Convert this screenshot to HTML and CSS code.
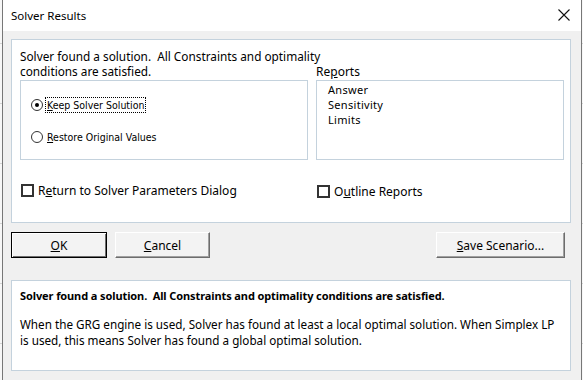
FILE: index.html
```html
<!DOCTYPE html>
<html lang="en">

<head>
    <meta charset="UTF-8">
    <meta name="viewport" content="width=device-width, initial-scale=1.0">
    <link rel="stylesheet" href="styles.css">
    <title>Solver Results</title>
</head>

<body>

    <div class="window">
        <header class="title-bar">
            <span class="title">Solver Results</span>
            <svg class="close" width="12" height="12" viewBox="0 0 12 12">
                <path d="M0.5 0.5 L11.5 11.5 M11.5 0.5 L0.5 11.5" stroke="#111" stroke-width="1.1" fill="none" />
            </svg>
        </header>

        <div class="dialog-body">
            <div class="panel results">
                <div class="message">Solver found a solution.&nbsp; All Constraints and optimality<br>conditions are satisfied.</div>
                <div class="reports-label">Re<u>p</u>orts</div>

                <div class="options">
                    <label class="radio-row">
                        <span class="radio checked"></span>
                        <span class="radio-text focus"><u>K</u>eep Solver Solution</span>
                    </label>
                    <label class="radio-row">
                        <span class="radio"></span>
                        <span class="radio-text"><u>R</u>estore Original Values</span>
                    </label>
                </div>

                <ul class="report-list" type="none">
                    <li>Answer</li>
                    <li>Sensitivity</li>
                    <li>Limits</li>
                </ul>

                <label class="check-row">
                    <span class="checkbox"></span>
                    <span>R<u>e</u>turn to Solver Parameters Dialog</span>
                </label>
                <label class="check-row outline">
                    <span class="checkbox"></span>
                    <span>O<u>u</u>tline Reports</span>
                </label>
            </div>

            <div class="buttons">
                <button class="btn default"><u>O</u>K</button>
                <button class="btn cancel"><u>C</u>ancel</button>
                <button class="btn save"><u>S</u>ave Scenario...</button>
            </div>

            <div class="panel details">
                <p class="details-head">Solver found a solution.&nbsp; All Constraints and optimality conditions are satisfied.</p>
                <p class="details-text">When the GRG engine is used, Solver has found at least a local optimal solution. When Simplex LP is used, this means Solver has found a global optimal solution.</p>
            </div>
        </div>
    </div>

</body>

</html>
```

FILE: styles.css
```css
body {
    margin: 0;
    padding: 0;
    height: 380px;
    overflow: hidden;
    background-color: #f7f7f7;
    background-image: repeating-linear-gradient(to bottom, transparent 0, transparent 43px, #d4d4d4 43px, #d4d4d4 44px, transparent 44px, transparent 60px);
    font-family: "Noto Sans", "Open Sans", sans-serif;
    font-size: 12px;
    color: #000;
}

.window {
    margin-left: 2px;
    width: 578px;
    height: 380px;
    border-left: 1px solid #777;
    border-right: 1px solid #777;
    background: #f0f0f0;
}

.title-bar {
    height: 31px;
    background: #fff;
    display: flex;
    align-items: center;
    justify-content: space-between;
    padding: 0 11px 0 8px;
}

.title {
    font-size: 11.5px;
    padding-bottom: 1px;
}

.close {
    margin-bottom: 1px;
}

.dialog-body {
    padding: 8px 10px 0 8px;
}

.panel {
    background: #fff;
    border: 1px solid #c4d2dd;
}

.results {
    height: 173px;
    box-sizing: content-box;
    padding: 9px 0 0 8px;
    display: grid;
    grid-template-columns: 288px 248px;
    grid-template-rows: 31px 80px 1fr;
    column-gap: 8px;
}

.message {
    white-space: nowrap;
    line-height: 15px;
    font-size: 11.8px;
}

.reports-label {
    align-self: end;
    line-height: 15px;
    padding-bottom: 1px;
}

.options,
.report-list {
    border: 1px solid #c4d2dd;
    margin: 0;
    box-sizing: border-box;
}

.options {
    padding: 16px 0 0 10px;
}

.radio-row {
    display: flex;
    align-items: center;
    height: 16px;
    margin-bottom: 16px;
}

.radio {
    width: 10px;
    height: 10px;
    border: 1px solid #333;
    border-radius: 50%;
    display: flex;
    align-items: center;
    justify-content: center;
    margin-right: 2px;
    background: #fff;
}

.radio.checked::after {
    content: "";
    width: 4px;
    height: 4px;
    border-radius: 50%;
    background: #000;
}

.radio-text {
    font-family: "DejaVu Sans Condensed", "DejaVu Sans", sans-serif;
    font-size: 10.5px;
    padding: 1px 1px;
    border: 1px solid transparent;
}

.radio-text.focus {
    border: 1px dotted #000;
}

.report-list {
    padding: 1px 0 0 11px;
    line-height: 15px;
    font-size: 11px;
    letter-spacing: 0.3px;
}

.check-row {
    display: flex;
    align-items: center;
    align-self: start;
    margin-top: 22px;
    margin-left: 1px;
}

.check-row.outline {
    margin-top: 23px;
}

.checkbox {
    width: 9px;
    height: 9px;
    border: 2px solid #333;
    background: #fff;
    margin-right: 4px;
}

.buttons {
    display: flex;
    margin-top: 9px;
    gap: 8px;
}

.btn {
    height: 26px;
    font-family: "Noto Sans", sans-serif;
    font-size: 12px;
    background: #f3f3f3;
    border: 1px solid;
    border-color: #fff #6d6d6d #6d6d6d #fff;
    box-shadow: inset -1px -1px 0 #a0a0a0;
    padding: 0;
}

.btn.default {
    width: 96px;
    border: 1px solid #000;
    box-shadow: inset 1px 1px 0 #fff, inset -1px -1px 0 #6d6d6d;
}

.cancel {
    width: 95px;
}

.save {
    width: 129px;
    margin-left: auto;
    margin-right: 6px;
}

.details {
    margin-top: 22px;
    height: 89px;
    padding: 0 8px;
}

.details p {
    margin: 0;
}

.details-head {
    font-weight: bold;
    font-size: 11px;
    letter-spacing: -0.1px;
    margin-top: 7px !important;
    line-height: 16px;
}

.details-text {
    margin-top: 12px !important;
    line-height: 16px;
    font-size: 11.7px;
}
```
